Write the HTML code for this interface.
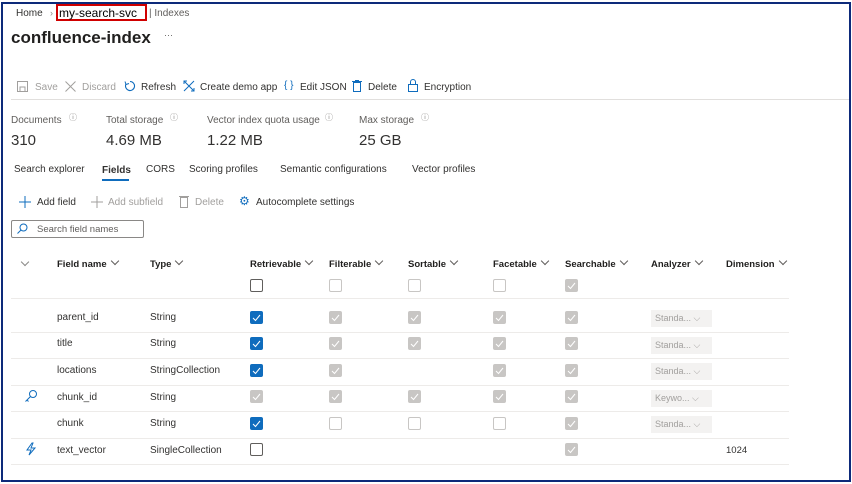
<!DOCTYPE html>
<html><head><meta charset="utf-8"><style>
*{margin:0;padding:0;box-sizing:border-box}
body{width:852px;height:484px;background:#fff;font-family:"Liberation Sans",sans-serif;color:#323130;position:relative;overflow:hidden}
.a{position:absolute;white-space:nowrap}
.f{position:absolute;left:1px;top:2px;width:850px;height:480px;border:2px solid #0d2a7a}
.s{font-size:10px}
.g{color:#a19f9d}
.cb{position:absolute;width:13px;height:13px;border-radius:2px}
.e{border:1px solid #605e5c;background:#fff}
.el{border:1px solid #c8c6c4;background:#fff}
.d{background:#c8c6c4}
.c{background:#0f6cbd}
.cb svg{position:absolute;left:2px;top:2px}
.ln{position:absolute;left:11px;width:778px;height:1px;background:#edebe9}
.dd{position:absolute;left:651px;width:61px;height:17px;background:#f3f2f1;color:#a19f9d;font-size:9px;padding:3px 0 0 4px}
.h{font-size:9.5px;color:#201f1e;font-weight:bold}
.ch{display:inline-block;width:6px;height:6px;border-right:1px solid #605e5c;border-bottom:1px solid #605e5c;transform:rotate(45deg);margin-left:5px;position:relative;top:-3px}
</style></head><body>
<div class="f"></div>
<div class="a s" style="left:16px;top:8px;color:#323130">Home</div>
<div class="a" style="left:50px;top:8px;font-size:9px;color:#8a8886">›</div>
<div class="a" style="left:56px;top:4px;width:91px;height:17px;border:2px solid #d00000"></div>
<div class="a" style="left:59px;top:6px;font-size:12px;color:#000">my-search-svc</div>
<div class="a s" style="left:149px;top:8px;color:#605e5c">| Indexes</div>
<div class="a" style="left:11px;top:28px;font-size:17px;font-weight:bold;color:#201f1e">confluence-index</div>
<div class="a" style="left:164px;top:30px;font-size:9px;color:#605e5c">···</div>

<svg class="a" style="left:17px;top:81px" width="11" height="11"><rect x="0.5" y="0.5" width="10" height="10" fill="none" stroke="#a19f9d"/><rect x="3" y="6" width="5" height="4.5" fill="none" stroke="#a19f9d"/></svg>
<div class="a s g" style="left:35px;top:82px">Save</div>
<svg class="a" style="left:65px;top:81px" width="11" height="11"><path d="M0.5 0.5l10 10M10.5 0.5l-10 10" stroke="#a19f9d"/></svg>
<div class="a s g" style="left:82px;top:82px">Discard</div>
<svg class="a" style="left:124px;top:80px" width="12" height="12"><path d="M6 1.5A4.5 4.5 0 1 1 2 4" stroke="#0f6cbd" fill="none" stroke-width="1.1"/><path d="M1 1.5l1 3 3-1" stroke="#0f6cbd" fill="none"/></svg>
<div class="a s" style="left:141px;top:82px">Refresh</div>
<svg class="a" style="left:183px;top:80px" width="12" height="12"><path d="M1 1l10 10M11 1L1 11M1 4V1h3M8 11h3V8" stroke="#0f6cbd" fill="none"/></svg>
<div class="a s" style="left:200px;top:82px">Create demo app</div>
<div class="a s" style="left:284px;top:80px;color:#0f6cbd">{ }</div>
<div class="a s" style="left:300px;top:82px">Edit JSON</div>
<svg class="a" style="left:352px;top:80px" width="10" height="12"><rect x="1.5" y="2.5" width="7" height="9" fill="none" stroke="#0f6cbd"/><path d="M0 1.5h10M3 0.5h4" stroke="#0f6cbd"/></svg>
<div class="a s" style="left:368px;top:82px">Delete</div>
<svg class="a" style="left:408px;top:79px" width="10" height="13"><rect x="0.5" y="5.5" width="9" height="7" fill="none" stroke="#0f6cbd"/><path d="M2.5 5.5V3a2.5 2.5 0 0 1 5 0v2.5" stroke="#0f6cbd" fill="none"/></svg>
<div class="a s" style="left:424px;top:82px">Encryption</div>
<div class="a" style="left:11px;top:99px;width:838px;height:1px;background:#e1dfdd"></div>

<div class="a s" style="left:11px;top:115px;color:#605e5c">Documents</div>
<div class="a s" style="left:106px;top:115px;color:#605e5c">Total storage</div>
<div class="a s" style="left:207px;top:115px;color:#605e5c">Vector index quota usage</div>
<div class="a s" style="left:359px;top:115px;color:#605e5c">Max storage</div>
<div class="a" style="left:69px;top:112px;font-size:8px;color:#8a8886">ⓘ</div>
<div class="a" style="left:170px;top:112px;font-size:8px;color:#8a8886">ⓘ</div>
<div class="a" style="left:325px;top:112px;font-size:8px;color:#8a8886">ⓘ</div>
<div class="a" style="left:421px;top:112px;font-size:8px;color:#8a8886">ⓘ</div>
<div class="a" style="left:11px;top:132px;font-size:15px">310</div>
<div class="a" style="left:106px;top:132px;font-size:15px">4.69 MB</div>
<div class="a" style="left:207px;top:132px;font-size:15px">1.22 MB</div>
<div class="a" style="left:359px;top:132px;font-size:15px">25 GB</div>

<div class="a s" style="left:14px;top:164px">Search explorer</div>
<div class="a s" style="left:102px;top:165px;font-weight:bold">Fields</div>
<div class="a" style="left:102px;top:179px;width:27px;height:2px;background:#0f6cbd"></div>
<div class="a s" style="left:146px;top:164px">CORS</div>
<div class="a s" style="left:189px;top:164px">Scoring profiles</div>
<div class="a s" style="left:280px;top:164px">Semantic configurations</div>
<div class="a s" style="left:412px;top:164px">Vector profiles</div>

<svg class="a" style="left:19px;top:196px" width="12" height="12"><path d="M6 0v12M0 6h12" stroke="#0f6cbd"/></svg>
<div class="a s" style="left:37px;top:197px">Add field</div>
<svg class="a" style="left:91px;top:196px" width="12" height="12"><path d="M6 0v12M0 6h12" stroke="#a19f9d"/></svg>
<div class="a s g" style="left:108px;top:197px">Add subfield</div>
<svg class="a" style="left:179px;top:195px" width="10" height="13"><rect x="1.5" y="2.5" width="7" height="10" fill="none" stroke="#a19f9d"/><path d="M0 1.5h10" stroke="#a19f9d"/></svg>
<div class="a s g" style="left:195px;top:197px">Delete</div>
<div class="a" style="left:239px;top:194px;font-size:12px;color:#0f6cbd">⚙</div>
<div class="a s" style="left:256px;top:197px">Autocomplete settings</div>
<div class="a" style="left:11px;top:220px;width:133px;height:18px;border:1px solid #8a8886;border-radius:2px"></div>
<svg class="a" style="left:17px;top:223px" width="11" height="11"><circle cx="6.5" cy="4.5" r="3.5" stroke="#0f6cbd" fill="none"/><path d="M4 7l-3.5 3.5" stroke="#0f6cbd"/></svg>
<div class="a" style="left:37px;top:224px;font-size:9.5px;color:#605e5c">Search field names</div>

<div class="a s" style="left:22px;top:260px"><span class="ch" style="margin-left:0;border-color:#8a8886"></span></div>
<div class="a h" style="left:57px;top:259px">Field name<span class="ch"></span></div>
<div class="a h" style="left:150px;top:259px">Type<span class="ch"></span></div>
<div class="a h" style="left:250px;top:259px">Retrievable<span class="ch"></span></div>
<div class="a h" style="left:329px;top:259px">Filterable<span class="ch"></span></div>
<div class="a h" style="left:408px;top:259px">Sortable<span class="ch"></span></div>
<div class="a h" style="left:493px;top:259px">Facetable<span class="ch"></span></div>
<div class="a h" style="left:565px;top:259px">Searchable<span class="ch"></span></div>
<div class="a h" style="left:651px;top:259px">Analyzer<span class="ch"></span></div>
<div class="a h" style="left:726px;top:259px">Dimension<span class="ch"></span></div>

<div class="cb e" style="left:250px;top:279px"></div>
<div class="cb el" style="left:329px;top:279px"></div>
<div class="cb el" style="left:408px;top:279px"></div>
<div class="cb el" style="left:493px;top:279px"></div>
<div class="cb d" style="left:565px;top:279px"><svg width="9" height="9"><path d="M1 5l2.5 2.5L8 2" stroke="#fff" fill="none" stroke-width="1"/></svg></div>
<div class="ln" style="top:298px"></div>

<div class="a s" style="left:57px;top:312px">parent_id</div><div class="a s" style="left:150px;top:312px">String</div>
<div class="a s" style="left:57px;top:338px">title</div><div class="a s" style="left:150px;top:338px">String</div>
<div class="a s" style="left:57px;top:365px">locations</div><div class="a s" style="left:150px;top:365px">StringCollection</div>
<div class="a s" style="left:57px;top:392px">chunk_id</div><div class="a s" style="left:150px;top:392px">String</div>
<div class="a s" style="left:57px;top:418px">chunk</div><div class="a s" style="left:150px;top:418px">String</div>
<div class="a s" style="left:57px;top:445px">text_vector</div><div class="a s" style="left:150px;top:445px">SingleCollection</div>
<div class="ln" style="top:332px"></div><div class="ln" style="top:358px"></div><div class="ln" style="top:385px"></div><div class="ln" style="top:411px"></div><div class="ln" style="top:438px"></div><div class="ln" style="top:464px"></div>

<svg class="a" style="left:24px;top:389px" width="14" height="14"><circle cx="9" cy="5" r="3.5" stroke="#0f6cbd" fill="none"/><path d="M6.5 7.5L1.5 12.5M3 11l1.5 1.5" stroke="#0f6cbd" fill="none"/></svg>
<svg class="a" style="left:25px;top:442px" width="12" height="14"><path d="M7 1L2 8h4l-2 5 6-7H6l2-5z" stroke="#0f6cbd" fill="none"/></svg>

<div class="cb c" style="left:250px;top:311px"><svg width="9" height="9"><path d="M1 5l2.5 2.5L8 2" stroke="#fff" fill="none"/></svg></div>
<div class="cb c" style="left:250px;top:337px"><svg width="9" height="9"><path d="M1 5l2.5 2.5L8 2" stroke="#fff" fill="none"/></svg></div>
<div class="cb c" style="left:250px;top:364px"><svg width="9" height="9"><path d="M1 5l2.5 2.5L8 2" stroke="#fff" fill="none"/></svg></div>
<div class="cb d" style="left:250px;top:390px"><svg width="9" height="9"><path d="M1 5l2.5 2.5L8 2" stroke="#fff" fill="none"/></svg></div>
<div class="cb c" style="left:250px;top:417px"><svg width="9" height="9"><path d="M1 5l2.5 2.5L8 2" stroke="#fff" fill="none"/></svg></div>
<div class="cb e" style="left:250px;top:443px"></div>

<div class="cb d" style="left:329px;top:311px"><svg width="9" height="9"><path d="M1 5l2.5 2.5L8 2" stroke="#fff" fill="none"/></svg></div>
<div class="cb d" style="left:329px;top:337px"><svg width="9" height="9"><path d="M1 5l2.5 2.5L8 2" stroke="#fff" fill="none"/></svg></div>
<div class="cb d" style="left:329px;top:364px"><svg width="9" height="9"><path d="M1 5l2.5 2.5L8 2" stroke="#fff" fill="none"/></svg></div>
<div class="cb d" style="left:329px;top:390px"><svg width="9" height="9"><path d="M1 5l2.5 2.5L8 2" stroke="#fff" fill="none"/></svg></div>
<div class="cb el" style="left:329px;top:417px"></div>

<div class="cb d" style="left:408px;top:311px"><svg width="9" height="9"><path d="M1 5l2.5 2.5L8 2" stroke="#fff" fill="none"/></svg></div>
<div class="cb d" style="left:408px;top:337px"><svg width="9" height="9"><path d="M1 5l2.5 2.5L8 2" stroke="#fff" fill="none"/></svg></div>
<div class="cb d" style="left:408px;top:390px"><svg width="9" height="9"><path d="M1 5l2.5 2.5L8 2" stroke="#fff" fill="none"/></svg></div>
<div class="cb el" style="left:408px;top:417px"></div>

<div class="cb d" style="left:493px;top:311px"><svg width="9" height="9"><path d="M1 5l2.5 2.5L8 2" stroke="#fff" fill="none"/></svg></div>
<div class="cb d" style="left:493px;top:337px"><svg width="9" height="9"><path d="M1 5l2.5 2.5L8 2" stroke="#fff" fill="none"/></svg></div>
<div class="cb d" style="left:493px;top:364px"><svg width="9" height="9"><path d="M1 5l2.5 2.5L8 2" stroke="#fff" fill="none"/></svg></div>
<div class="cb d" style="left:493px;top:390px"><svg width="9" height="9"><path d="M1 5l2.5 2.5L8 2" stroke="#fff" fill="none"/></svg></div>
<div class="cb el" style="left:493px;top:417px"></div>

<div class="cb d" style="left:565px;top:311px"><svg width="9" height="9"><path d="M1 5l2.5 2.5L8 2" stroke="#fff" fill="none"/></svg></div>
<div class="cb d" style="left:565px;top:337px"><svg width="9" height="9"><path d="M1 5l2.5 2.5L8 2" stroke="#fff" fill="none"/></svg></div>
<div class="cb d" style="left:565px;top:364px"><svg width="9" height="9"><path d="M1 5l2.5 2.5L8 2" stroke="#fff" fill="none"/></svg></div>
<div class="cb d" style="left:565px;top:390px"><svg width="9" height="9"><path d="M1 5l2.5 2.5L8 2" stroke="#fff" fill="none"/></svg></div>
<div class="cb d" style="left:565px;top:417px"><svg width="9" height="9"><path d="M1 5l2.5 2.5L8 2" stroke="#fff" fill="none"/></svg></div>
<div class="cb d" style="left:565px;top:443px"><svg width="9" height="9"><path d="M1 5l2.5 2.5L8 2" stroke="#fff" fill="none"/></svg></div>

<div class="dd" style="top:310px">Standa... ⌵</div>
<div class="dd" style="top:337px">Standa... ⌵</div>
<div class="dd" style="top:363px">Standa... ⌵</div>
<div class="dd" style="top:390px">Keywo... ⌵</div>
<div class="dd" style="top:416px">Standa... ⌵</div>
<div class="a" style="left:726px;top:445px;font-size:9.5px">1024</div>
</body></html>
